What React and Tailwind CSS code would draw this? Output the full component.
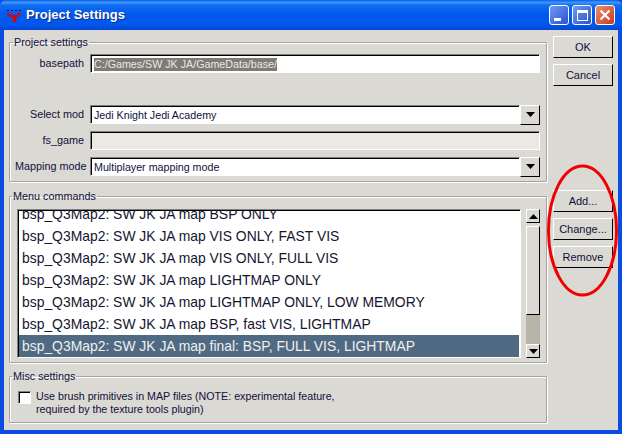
const F = "font-['Liberation_Sans',sans-serif]";

function Field({ disabled, children, className = "" }) {
  return (
    <div className={`h-[19px] border-t border-l border-t-[#808080] border-l-[#808080] border-b border-r border-b-white border-r-white shadow-[inset_1px_1px_0_#000] flex items-center pl-[3px] pt-[1px] text-[10.7px] leading-none text-[#10103a] ${disabled ? "bg-[#ece9e4]" : "bg-white"} ${className}`}>
      {children}
    </div>
  );
}

function ArrowBtn({ w = "w-[20px]", h = "h-[20px]", up = false }) {
  return (
    <div className={`${w} ${h} shrink-0 bg-[#dbd9d4] border-t border-l border-t-white border-l-white border-b border-r border-b-black border-r-black flex items-center justify-center`}>
      <svg width="9" height="5" viewBox="0 0 9 5" className={up ? "rotate-180" : ""}><path d="M0 0h9L4.5 5z" fill="#000" /></svg>
    </div>
  );
}

function Row({ label, children, className = "" }) {
  return (
    <div className={`flex items-center h-[19px] ${className}`}>
      <div className="w-[69px] text-right text-[10.8px] whitespace-nowrap text-[#10103a] shrink-0">{label}</div>
      <div className="ml-[6px] flex-1 min-w-0">{children}</div>
    </div>
  );
}

function Combo({ text }) {
  return (
    <div className="flex items-center">
      <Field className="flex-1 min-w-0">{text}</Field>
      <ArrowBtn />
    </div>
  );
}

function Group({ title, className = "", children }) {
  return (
    <fieldset className={`border border-[#a5a39e] shadow-[1px_1px_0_#fff,inset_1px_1px_0_#fff] rounded-[1px] ${className}`}>
      <legend className="ml-[2px] px-[1px] text-[10.8px] leading-[13px] text-[#10103a]">{title}</legend>
      {children}
    </fieldset>
  );
}

function Btn({ children, className = "" }) {
  return (
    <div className={`h-[22px] w-[60px] bg-[#dbd9d4] border-t border-l border-t-white border-l-white border-b border-r border-b-black border-r-black flex items-center justify-center text-[11px] text-[#10103a] ${className}`}>
      {children}
    </div>
  );
}

const items = [
  "bsp_Q3Map2: SW JK JA map BSP ONLY",
  "bsp_Q3Map2: SW JK JA map VIS ONLY, FAST VIS",
  "bsp_Q3Map2: SW JK JA map VIS ONLY, FULL VIS",
  "bsp_Q3Map2: SW JK JA map LIGHTMAP ONLY",
  "bsp_Q3Map2: SW JK JA map LIGHTMAP ONLY, LOW MEMORY",
  "bsp_Q3Map2: SW JK JA map BSP, fast VIS, LIGHTMAP",
  "bsp_Q3Map2: SW JK JA map final: BSP, FULL VIS, LIGHTMAP",
];

export default function App() {
  return (
    <div className={`relative w-[622px] h-[434px] overflow-hidden flex flex-col bg-[#0a4de0] ${F}`}>
      <div className="h-[30px] shrink-0 flex items-center pl-[6px] pr-[7px] bg-[linear-gradient(180deg,#0a5ce8_0%,#3b97fb_8%,#0f6cf0_18%,#0058ec_50%,#0058ee_80%,#0247d2_100%)] rounded-t-[6px]">
        <svg width="16" height="15" viewBox="0 0 16 15" className="shrink-0">
          <path d="M1 5h2l2 2h6l2-2h2v1l-3 3-2 1v4H7v-4L4 9 1 6z" fill="#e00000" />
          <path d="M1 2h2v1H1zM5 2h2v1H5zM9 2h2v1H9zM13 2h2v1h-2z" fill="#101040" />
        </svg>
        <div className="ml-[4px] text-white font-bold text-[13px] [text-shadow:1px_1px_0_#0f2a80] flex-1">Project Settings</div>
        <div className="flex gap-[3px]">
          <div className="w-[20px] h-[20px] rounded-[3px] border border-white bg-[linear-gradient(135deg,#6f9bf2,#2a52d0)] flex items-end pl-[4px] pb-[3px]"><div className="w-[7px] h-[3px] bg-white" /></div>
          <div className="w-[20px] h-[20px] rounded-[3px] border border-white bg-[linear-gradient(135deg,#6f9bf2,#2a52d0)] flex items-center justify-center"><div className="w-[11px] h-[11px] border border-white border-t-[3px]" /></div>
          <div className="w-[20px] h-[20px] rounded-[3px] border border-white bg-[linear-gradient(135deg,#ec8f72,#c73a18)] flex items-center justify-center">
            <svg width="12" height="12" viewBox="0 0 12 12"><path d="M1.5 1.5l9 9M10.5 1.5l-9 9" stroke="#fff" strokeWidth="2.2" /></svg>
          </div>
        </div>
      </div>
      <div className="flex-1 mx-[4px] mb-[4px] bg-[#dbd9d4] flex pl-[5px] pt-[6px] min-h-0">
        <div className="w-[538px] shrink-0 flex flex-col">
          <Group title="Project settings" className="h-[146px] px-[1px]">
            <div className="pl-[4px] pr-[5px] pt-[5px]">
              <Row label="basepath">
                <Field><span className="bg-[#7f7b73] text-[#e8e8e8] h-[13px] leading-[13px]">C:/Games/SW JK JA/GameData/base/</span></Field>
              </Row>
              <Row label="Select mod" className="mt-[32px]"><Combo text="Jedi Knight Jedi Academy" /></Row>
              <Row label="fs_game" className="mt-[7px]"><Field disabled /></Row>
              <Row label="Mapping mode" className="mt-[7px]"><Combo text="Multiplayer mapping mode" /></Row>
            </div>
          </Group>
          <Group title="Menu commands" className="h-[173px] mt-[8px]">
            <div className="flex pl-[7px] pr-[6px] pt-[6px] items-start">
              <div className="w-[504px] h-[149px] border-t border-l border-t-[#808080] border-l-[#808080] border-b border-r border-b-white border-r-white shadow-[inset_1px_1px_0_#000] bg-white overflow-hidden flex flex-col justify-end">
                {items.map((t, i) => (
                  <div key={t} className={`h-[22px] shrink-0 pl-[3px] mx-[1px] text-[13.9px] leading-[22px] whitespace-nowrap ${i === 6 ? "bg-[#4f6a82] text-[#f0f0f0]" : "text-[#151530]"}`}>{t}</div>
                ))}
              </div>
              <div className="ml-[5px] w-[14px] h-[149px] flex flex-col">
                <ArrowBtn w="w-[14px]" h="h-[14px]" up />
                <div className="h-[3px] bg-[#dbd9d4]" />
                <div className="h-[89px] bg-[#dbd9d4] border-t border-l border-t-white border-l-white border-b border-r border-b-black border-r-black" />
                <div className="flex-1 bg-[#b8b4a8]" />
                <ArrowBtn w="w-[14px]" h="h-[14px]" />
              </div>
            </div>
          </Group>
          <Group title="Misc settings" className="h-[53px] mt-[7px]">
            <div className="flex pl-[8px] pt-[7px]">
              <div className="w-[13px] h-[13px] mt-[1px] shrink-0 bg-white border-t border-l border-t-[#808080] border-l-[#808080] border-b border-r border-b-white border-r-white shadow-[inset_1px_1px_0_#000]" />
              <div className="ml-[5px] text-[10.7px] leading-[13px] text-[#10103a]">
                Use brush primitives in MAP files (NOTE: experimental feature,<br />required by the texture tools plugin)
              </div>
            </div>
          </Group>
        </div>
        <div className="ml-[6px] flex flex-col">
          <Btn>OK</Btn>
          <Btn className="mt-[6px]">Cancel</Btn>
          <Btn className="mt-[104px]">Add...</Btn>
          <Btn className="mt-[6px]">Change...</Btn>
          <Btn className="mt-[6px]">Remove</Btn>
        </div>
      </div>
      <svg className="absolute left-[545px] top-[160px] pointer-events-none" width="77" height="142" viewBox="0 0 77 142">
        <ellipse cx="37.5" cy="70.5" rx="34" ry="64.5" fill="none" stroke="#f00000" strokeWidth="3" />
      </svg>
    </div>
  );
}
